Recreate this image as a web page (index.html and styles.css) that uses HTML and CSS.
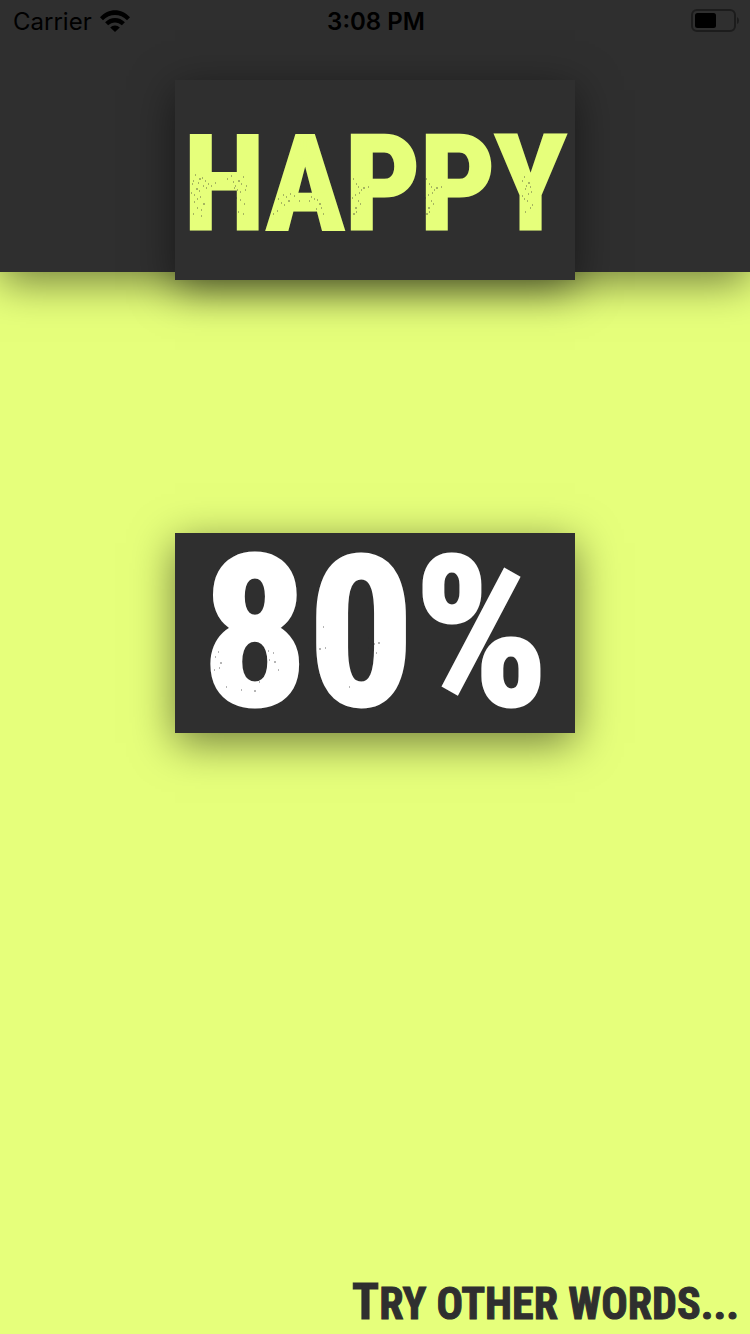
FILE: index.html
```html
<!DOCTYPE html>
<html lang="en">
<head>
<meta charset="utf-8">
<meta name="viewport" content="width=device-width, initial-scale=1">
<title>Happy</title>
<link rel="stylesheet" href="styles.css">
</head>
<body>
<div class="screen">
  <header class="header">
    <div class="status">
      <div class="carrier">
        <span>Carrier</span>
        <svg class="wifi" viewBox="0 0 30 22" aria-hidden="true">
          <path d="M0 7.2C8.300-2.200 21.700-2.200 30 7.200L27 10.300C20.400 3.300 9.600 3.300 3 10.300Z"/>
          <path d="M5.100 12.300C10.600 6.400 19.400 6.400 24.900 12.300L21.900 15.300C18 11.400 12 11.400 8.100 15.300Z"/>
          <path d="M10.200 17.400C12.900 14.700 17.100 14.700 19.800 17.400L15 22Z"/>
        </svg>
      </div>
      <time class="time">3:08 PM</time>
      <svg class="battery" viewBox="0 0 48 24" aria-hidden="true">
        <rect class="battery-case" x="1" y="1" width="43" height="21" rx="5"/>
        <rect x="4" y="4" width="21" height="15" rx="2.500"/>
        <path class="battery-tip" d="M46 8Q48 9 48 11.500T46 15Z"/>
      </svg>
    </div>
    <div class="card card-word">
      <h1 class="word">HAPPY</h1>
      <svg class="grain" viewBox="0 0 400 200" aria-hidden="true">
        <path d="M20 95h1M24 99h2M17 104h1M28 106h1M21 109h2M30 101h1M16 113h1M25 117h1M19 122h1M28 124h2M22 128h1M18 134h1M26 136h1M33 104h1M56 96h1M63 101h2M68 97h1M59 108h1M65 112h1M71 106h1M61 118h1M69 124h1M63 132h1M103 119h1M108 115h1M113 121h2M109 125h1M119 116h1M134 121h1M139 119h1M144 124h2M141 129h1M148 134h1M98 134h1M178 99h1M181 104h1M188 108h2M184 113h1M177 118h1M185 124h1M180 128h2M178 134h2M251 99h1M254 104h1M261 108h2M257 113h1M250 118h1M258 124h1M253 128h2M251 134h2M349 97h1M353 103h2M350 109h1M356 112h1M347 116h1M352 121h1M357 125h1M350 132h1"/>
        <path d="M18 101h1M23 103h1M27 98h1M31 108h1M24 111h1M19 115h1M22 119h1M26 130h1M36 106h1M40 103h1M52 99h1M58 102h1M60 106h1M66 104h1M62 110h1M70 110h1M57 113h1M65 120h1M68 134h1M106 123h1M111 117h1M115 114h1M124 121h1M136 117h1M142 120h1M146 128h1M102 131h1M183 107h1M186 110h1M193 107h1M180 115h1M183 121h1M181 132h1M256 107h1M259 110h1M266 107h1M253 115h1M256 121h1M254 132h1M347 101h1M351 106h1M355 107h1M353 114h1M349 119h1M355 128h1"/>
      </svg>
    </div>
  </header>
  <main class="result">
    <div class="card card-score">
      <output class="score">80%</output>
      <svg class="grain" viewBox="0 0 400 200" aria-hidden="true">
        <path d="M43 119h1M40 124h1M45 130h2M39 137h1M44 135h1M93 118h1M98 120h1M94 127h1M99 129h2M103 137h1M51 154h1M66 157h1M79 158h2M84 149h1M136 96h2M148 94h1M137 109h1M144 116h2M150 115h1M139 125h1M193 105h1M199 111h1M203 110h2M195 116h1M201 120h1M197 130h1M193 115h1M174 154h1"/>
      </svg>
    </div>
  </main>
  <footer class="footer">
    <button class="again" type="button">Try other words...</button>
  </footer>
</div>
</body>
</html>
```
FILE: styles.css
```css
* { box-sizing: border-box; }

body {
  margin: 0;
  background: #e6ff7b;
  color: #2f2f2f;
  font-family: "Roboto Condensed", "Open Sans Condensed", sans-serif;
}

.screen {
  min-height: 100vh;
  display: flex;
  flex-direction: column;
}

.header {
  height: 272px;
  background: #2f2f2f;
  box-shadow: 0 10px 40px rgba(0, 0, 0, .5);
  display: flex;
  flex-direction: column;
  align-items: center;
  gap: 40px;
}

.status {
  align-self: stretch;
  flex: none;
  height: 40px;
  padding: 0 11px 0 13px;
  display: grid;
  grid-template-columns: 1fr auto 1fr;
  align-items: center;
  color: #000;
  font: 24px/40px Inter, sans-serif;
}

.carrier { display: flex; align-items: center; gap: 8px; }
.wifi { width: 30px; height: 22px; }
.time { font-weight: 600; }
.carrier span, .time { padding-top: 2px; }
.battery { width: 48px; height: 24px; justify-self: end; }
.battery-case { fill: none; stroke: #1c1c1c; stroke-width: 2; }
.battery-tip { fill: #1c1c1c; }

.card {
  position: relative;
  flex: none;
  width: 400px;
  height: 200px;
  background: #2f2f2f;
  box-shadow: 0 10px 40px rgba(0, 0, 0, .5);
  display: flex;
  align-items: center;
  justify-content: center;
}

.card-word { padding-top: 8px; }

.word, .score {
  margin: 0;
  font-weight: 700;
  line-height: 200px;
  white-space: nowrap;
}

.word {
  color: #e6ff7b;
  font-size: 132px;
  -webkit-text-stroke: 3px #e6ff7b;
}

.score {
  color: #fff;
  font-size: 210px;
  -webkit-text-stroke: 3px #fff;
}

.grain {
  position: absolute;
  inset: 0;
  fill: none;
  stroke: #2f2f2f;
  stroke-opacity: .7;
}

.result {
  flex: 1;
  display: flex;
  align-items: center;
  justify-content: center;
  padding: 0 20px 272px;
}

.footer {
  display: flex;
  justify-content: flex-end;
  padding: 6px 11px 0;
}

.again {
  display: block;
  border: 0;
  padding: 0;
  background: none;
  color: #2f2f2f;
  font: 700 44px/60px "Roboto Condensed", "Open Sans Condensed", sans-serif;
  text-transform: uppercase;
  -webkit-text-stroke: 1px #2f2f2f;
  cursor: pointer;
}

.again::first-letter { font-size: 50px; }
```
